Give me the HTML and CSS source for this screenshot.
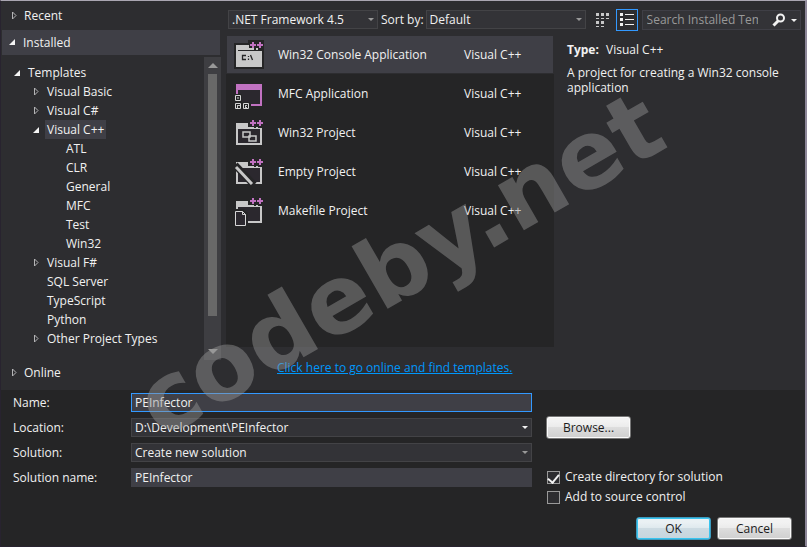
FILE: index.html
```html
<!DOCTYPE html>
<html lang="en">
<head>
<meta charset="utf-8">
<title>New Project</title>
<link rel="stylesheet" href="styles.css">
</head>
<body>
<svg class="defs" aria-hidden="true">
  <symbol id="plusplus" viewBox="0 0 30 32">
    <path d="M15 2h15v9h-6v-2h-2v2h-2v-2h-5z" fill="#252526"/>
    <path d="M18 3h2v2h2v2h-2v2h-2v-2h-2v-2h2zM25 3h2v2h2v2h-2v2h-2v-2h-2v-2h2z" fill="#c172c1"/>
  </symbol>
  <symbol id="closed" viewBox="0 0 6 9"><path d="M1.500 1v7L5 4.500z" fill="none" stroke="#b4b4b6"/></symbol>
  <symbol id="open" viewBox="0 0 6 6"><path d="M6 0v6H0z" fill="#f4f4f4"/></symbol>
</svg>
<main class="dialog">
  <section class="browser">
    <nav class="sidebar">
      <button class="group"><svg class="closed"><use href="#closed"/></svg>Recent</button>
      <button class="group current"><svg class="open"><use href="#open"/></svg>Installed</button>
      <div class="treebox">
        <ul class="tree">
          <li class="l1"><svg class="open"><use href="#open"/></svg><span>Templates</span></li>
          <li class="l2"><svg class="closed"><use href="#closed"/></svg><span>Visual Basic</span></li>
          <li class="l2"><svg class="closed"><use href="#closed"/></svg><span>Visual C#</span></li>
          <li class="l2 picked"><svg class="open"><use href="#open"/></svg><span>Visual C++</span></li>
          <li class="l3"><span>ATL</span></li>
          <li class="l3"><span>CLR</span></li>
          <li class="l3"><span>General</span></li>
          <li class="l3"><span>MFC</span></li>
          <li class="l3"><span>Test</span></li>
          <li class="l3"><span>Win32</span></li>
          <li class="l2"><svg class="closed"><use href="#closed"/></svg><span>Visual F#</span></li>
          <li class="l2 leaf"><span>SQL Server</span></li>
          <li class="l2 leaf"><span>TypeScript</span></li>
          <li class="l2 leaf"><span>Python</span></li>
          <li class="l2"><svg class="closed"><use href="#closed"/></svg><span>Other Project Types</span></li>
        </ul>
        <div class="scrollbar" aria-hidden="true"><i class="up"></i><i class="thumb"></i><i class="down"></i></div>
      </div>
      <button class="group last"><svg class="closed"><use href="#closed"/></svg>Online</button>
    </nav>

    <div class="content">
      <div class="toolbar">
        <span class="combo framework"><select aria-label="Framework"><option>.NET Framework 4.5</option></select></span>
        <label for="sort">Sort by:</label>
        <span class="combo sort"><select id="sort"><option>Default</option></select></span>
        <button class="view" aria-label="Small icons"><svg viewBox="0 0 20 20"><path d="M3 3h3v3H3zM8 3h3v3H8zM13 3h3v3h-3zM3 8h3v1H3zM8 8h3v1H8zM13 8h3v1h-3zM3 11h3v3H3zM8 11h3v3H8zM3 16h3v1H3zM8 16h3v1H8z" fill="#c8c8c8"/></svg></button>
        <button class="view on" aria-label="Medium icons"><svg viewBox="0 0 20 20"><path d="M3 3h3v3H3zM3 8h3v3H3zM3 13h3v3H3zM8 4h9v1H8zM8 9h9v1H8zM8 14h9v1H8z" fill="#f1f1f1"/></svg></button>
        <div class="search">
          <input type="search" aria-label="Search" placeholder="Search Installed Templates (Ctrl+E)">
          <button aria-label="Search"><svg viewBox="0 0 14 14"><circle cx="8.500" cy="5" r="3.500" fill="none" stroke="#f1f1f1" stroke-width="2"/><path d="M6 8L1.500 12.500" stroke="#f1f1f1" stroke-width="3"/></svg></button>
          <button class="more" aria-label="Search options"></button>
        </div>
      </div>
      <div class="panes">
        <div class="results">
          <ul class="templates">
            <li class="selected">
              <svg viewBox="0 0 30 32"><path d="M0 4h14v-3h16v29H0z" fill="#252526"/><path d="M2 6h26v22H2z" fill="#c8c8c8"/><path d="M4 11h24v1H4z" fill="#252526"/><path d="M12 16.500H8.500v4H12M14.500 17v1M14.500 19.500v1.500M16.500 16l2 5" fill="none" stroke="#252526" stroke-width="1.300"/><use href="#plusplus"/></svg>
              <span>Win32 Console Application</span><span>Visual C++</span></li>
            <li>
              <svg viewBox="0 0 30 32"><path d="M4 12h22v14H4z" fill="#2b282e"/><path d="M2 6h26v22H17v-2h9V12H4v4H2z" fill="#c172c1"/><path d="M0 16h8v8h8v8H0z" fill="#252526"/><path d="M1.500 17.500h5v5h-5zM1.500 25.500h5v5h-5zM9.500 25.500h5v5h-5zM3 20h2" fill="none" stroke="#d6d6d6"/><path d="M3 27h3v1H4v2H3zM11 27h2v1h-1v1h1v1h-2z" fill="#c8c8c8"/></svg>
              <span>MFC Application</span><span>Visual C++</span></li>
            <li>
              <svg viewBox="0 0 30 32"><path d="M2 6h12v4h14v18H2z" fill="#c8c8c8"/><path d="M4 12h22v14H4z" fill="#2b282e"/><path d="M9 15h7v5H9zM15 19h7v5h-7z" fill="#2b282e" stroke="#c8c8c8" stroke-width="1.500"/><use href="#plusplus"/></svg>
              <span>Win32 Project</span><span>Visual C++</span></li>
            <li>
              <svg viewBox="0 0 30 32"><path d="M2 6h12v4h14v18H2z" fill="#c8c8c8"/><path d="M4 12h22v14H4z" fill="#2b282e"/><path d="M1 9L20 29" stroke="#252526" stroke-width="7"/><path d="M2 11L18 28" stroke="#c8c8c8" stroke-width="3"/><path d="M2 20v8h7v-2H4v-6z" fill="#c8c8c8"/><use href="#plusplus"/></svg>
              <span>Empty Project</span><span>Visual C++</span></li>
            <li>
              <svg viewBox="0 0 30 32"><path d="M2 6h12v4h14v18H2z" fill="#c8c8c8"/><path d="M4 12h22v14H4z" fill="#2b282e"/><path d="M0 14h10l4 4v13H0z" fill="#252526"/><path d="M1.500 16.500h7l3 3v11h-10zM8.500 16.500v3h3" fill="#2b282e" stroke="#d6d6d6"/><use href="#plusplus"/></svg>
              <span>Makefile Project</span><span>Visual C++</span></li>
          </ul>
          <a class="online" href="#">Click here to go online and find templates.</a>
        </div>
        <aside class="details">
          <p><b>Type:</b> Visual C++</p>
          <p>A project for creating a Win32 console application</p>
        </aside>
      </div>
    </div>
  </section>

  <form class="settings">
    <div class="fields">
      <label for="name">Name:</label><input id="name" class="focused" value="PEInfector">
      <label for="location">Location:</label><span class="combo bright"><select id="location"><option>D:\Development\PEInfector</option></select></span>
      <label for="solution">Solution:</label><span class="combo"><select id="solution"><option>Create new solution</option></select></span>
      <label for="solname">Solution name:</label><input id="solname" value="PEInfector">
    </div>
    <div class="options">
      <button type="button" class="push">Browse...</button>
      <div class="checks">
        <label><input type="checkbox" checked>Create directory for solution</label>
        <label><input type="checkbox">Add to source control</label>
      </div>
      <div class="actions">
        <button type="button" class="push primary">OK</button>
        <button type="button" class="push">Cancel</button>
      </div>
    </div>
  </form>
  <div class="watermark" aria-hidden="true"><span>codeby.net</span></div>
</main>
</body>
</html>
```
FILE: styles.css
```css
* { box-sizing: border-box; }
body {
  margin: 0;
  min-height: 100vh;
  display: flex;
  background: #2d2d30;
  color: #f1f1f1;
  font: 12px/16px "Open Sans", "Noto Sans", sans-serif;
}
button, input, select { font: inherit; color: inherit; }
button { background: none; border: 0; padding: 0; }
ul, p { margin: 0; padding: 0; list-style: none; }
.defs { position: absolute; width: 0; height: 0; }
.dialog {
  position: relative;
  flex: 1;
  display: flex;
  flex-direction: column;
  overflow: hidden;
  border: 1px solid #28232f;
  border-top-color: #aaa6b2;
  border-right: 2px solid #8d8799;
}
.browser { display: flex; height: 389px; }
.sidebar { width: 225px; flex: none; display: flex; flex-direction: column; }
.group {
  height: 25px;
  margin: 2px 6px 2px 1px;
  padding-left: 22px;
  position: relative;
  text-align: left;
}
.current { background: #3f3f46; padding-left: 21px; margin-top: 0; }
.last { margin-top: 0; margin-bottom: 5px; }
svg.closed { width: 6px; height: 9px; }
svg.open { width: 6px; height: 6px; }
.group svg { position: absolute; left: 9px; top: 8px; }
.group svg.open { left: 7px; top: 9px; }
.treebox { flex: 1; display: flex; }
.tree { flex: 1; padding-top: 6px; }
.tree li { display: flex; align-items: center; height: 19px; }
.tree svg { flex: none; margin-right: 6px; }
.tree span { padding: 0 2px; line-height: 19px; }
.l1 { padding-left: 13px; }
.l2 { padding-left: 32px; }
.l2.leaf { padding-left: 44px; }
.l3 { padding-left: 63px; }
.picked span { background: #3f3f46; }
.scrollbar {
  width: 17px;
  margin-right: 5px;
  padding: 6px 4px;
  background: #3e3e42;
  display: flex;
  flex-direction: column;
  align-items: center;
}
.up, .down { border: 5px solid transparent; border-top-width: 0; border-bottom-color: #999; }
.down { border-width: 5px 5px 0; border-top-color: #999; }
.thumb { width: 9px; height: 242px; margin: 6px 0 auto; background: #686868; }

.content { flex: 1; min-width: 0; display: flex; flex-direction: column; }
.toolbar { display: flex; align-items: center; height: 35px; padding: 2px 4px 0 2px; }
.combo { position: relative; display: block; }
.combo::after, .more::after {
  content: "";
  position: absolute;
  right: 4px;
  top: 8px;
  border: 3px solid transparent;
  border-top-color: #999;
  border-bottom: 0;
  pointer-events: none;
}
.combo.bright::after { border-top-color: #f1f1f1; }
select, .fields input {
  appearance: none;
  display: block;
  width: 100%;
  height: 19px;
  padding: 0 3px;
  line-height: 16px;
  border: 1px solid #434346;
  border-radius: 0;
  background: #333337;
  outline: 0;
}
.framework { width: 150px; margin-right: 3px; }
.sort { width: 160px; margin-left: 2px; }
.view { width: 22px; height: 22px; margin-left: 6px; border: 1px solid transparent; }
.view svg { display: block; width: 20px; height: 20px; }
.view.on { border-color: #3399ff; margin-left: 2px; }
.search {
  flex: 1;
  min-width: 0;
  height: 20px;
  margin-left: 4px;
  display: flex;
  align-items: center;
  background: #333337;
  border: 1px solid #3f3f46;
}
.search input { flex: 1; min-width: 0; padding: 0 0 0 4px; border: 0; background: none; outline: 0; }
.search input::placeholder { color: #999; opacity: 1; }
.search svg { display: block; width: 14px; height: 14px; margin-left: 2px; }
.more { position: relative; width: 14px; height: 18px; }
.more::after { border-top-color: #f1f1f1; right: 3px; }
.panes { flex: 1; display: flex; margin-top: -1px; }
.results { width: 328px; flex: none; }
.templates { height: 312px; background: #252526; }
.templates li {
  display: grid;
  grid-template-columns: 44px 186px 1fr;
  align-items: center;
  height: 39px;
  padding-left: 8px;
}
.templates svg { width: 30px; height: 32px; }
.templates .selected { background: #3f3f46; border: 1px solid #2d2d30; padding-left: 7px; }
.online { display: block; padding: 13px 0 0 51px; color: #0097fb; }
.details { flex: 1; padding: 7px 20px 0 13px; }
.details p { margin-bottom: 8px; line-height: 15px; }
.details b { margin-right: 4px; }

.settings {
  flex: 1;
  display: flex;
  gap: 14px;
  padding: 3px 13px 6px 12px;
  background: #252526;
}
.fields {
  width: 519px;
  display: grid;
  grid-template-columns: 118px 1fr;
  grid-auto-rows: 19px;
  row-gap: 6px;
  align-items: center;
}
.fields input { background: #3f3f46; border-color: #3f3f46; }
.fields input.focused { border-color: #3399ff; }
.options { flex: 1; display: flex; flex-direction: column; align-items: flex-start; padding-top: 23px; }
.push {
  width: 85px;
  height: 23px;
  color: #1b1b1c;
  border: 1px solid #777;
  border-radius: 3px;
  background: linear-gradient(#f2f2f2 0 20%, #ebebeb 48%, #ddd 50%, #cfcfcf);
  box-shadow: inset 0 0 0 1px #fafafa;
}
.checks { margin-top: 28px; }
.checks label { display: flex; align-items: center; height: 20px; }
.checks input {
  appearance: none;
  width: 13px;
  height: 13px;
  margin: 0 5px 0 1px;
  border: 1px solid #999;
  background: #2d2d30;
  display: grid;
  place-items: center;
}
.checks input:checked::before {
  content: "";
  width: 5px;
  height: 9px;
  border: solid #f1f1f1;
  border-width: 0 2px 2px 0;
  transform: rotate(40deg);
}
.actions { display: flex; gap: 6px; margin-left: auto; margin-top: auto; }
.actions .push { width: 75px; }
.push.primary {
  border-color: #3c9cc0;
  background: linear-gradient(#eaf1f4 0 20%, #dfe9ee 48%, #cddbe2 50%, #c6d5dd);
  box-shadow: inset 0 0 0 1px #38c4ef;
}
.watermark {
  position: absolute;
  left: 398px;
  top: 263px;
  width: 0;
  height: 0;
  display: flex;
  align-items: center;
  justify-content: center;
  pointer-events: none;
}
.watermark span {
  font: 700 95px/95px "DejaVu Sans", sans-serif;
  color: rgba(150, 150, 150, .45);
  transform: rotate(-30deg);
}
```
